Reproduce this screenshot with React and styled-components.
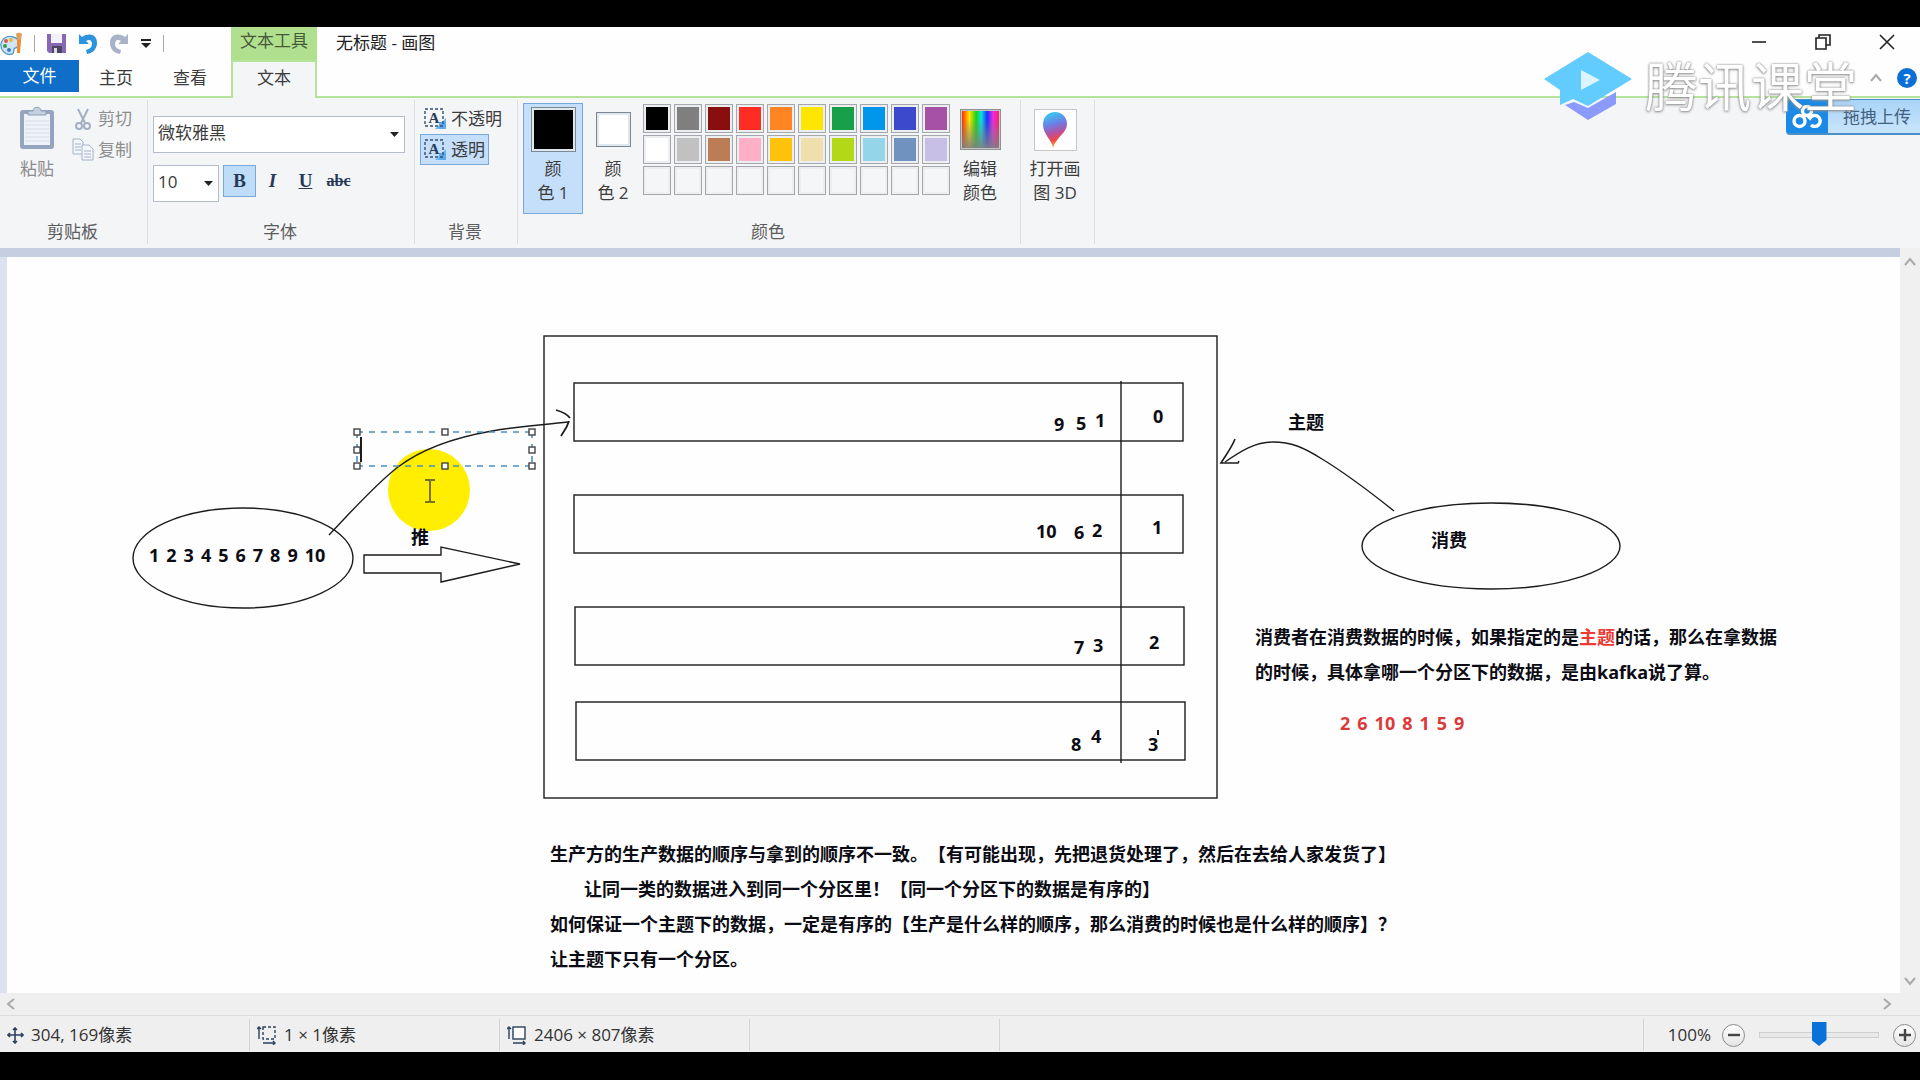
import React, { useState } from "react";
import styled, { createGlobalStyle } from "styled-components";

const COLORS = [
  ["#000000", "#7f7f7f", "#880e10", "#ff2c23", "#ff8423", "#ffe600", "#18a048", "#0096ec", "#3d49cc", "#a651a6"],
  ["#ffffff", "#c1c1c1", "#bb7d55", "#ffb0c8", "#ffc20a", "#eedfac", "#b2d818", "#95d5ea", "#6f92bf", "#c7bfe6"],
  Array(10).fill(null),
];

const PARTITIONS = [
  { x: 567, y: 126, w: 609, h: 58 },
  { x: 567, y: 238, w: 609, h: 58 },
  { x: 568, y: 350, w: 609, h: 58 },
  { x: 569, y: 445, w: 609, h: 58 },
];

const DIGITS = [
  ["9", 1047, 150],
  ["5", 1069, 149],
  ["1", 1088, 146],
  ["0", 1146, 142],
  ["10", 1029, 257],
  ["6", 1067, 258],
  ["2", 1085, 256],
  ["1", 1145, 253],
  ["7", 1067, 373],
  ["3", 1086, 371],
  ["2", 1142, 368],
  ["8", 1064, 470],
  ["4", 1084, 462],
  ["3", 1141, 470],
];

const HANDLES = [
  [350, 175],
  [438, 175],
  [525, 175],
  [350, 193],
  [525, 193],
  [350, 209],
  [438, 209],
  [525, 209],
];

const PaintIcon = () => (
  <svg width="23" height="24" viewBox="0 0 23 24">
    <path d="M1 12C2 6 8 3 13 5c5 1 8 5 6 9-1 2-4 1-5 3s1 4-2 5C6 24 0 18 1 12z" fill="#cfe6f6" stroke="#5c9dcb" strokeWidth="1.4" />
    <circle cx="5" cy="14" r="2" fill="#36a04a" />
    <circle cx="6" cy="9" r="2" fill="#e3574a" />
    <circle cx="11" cy="8" r="2" fill="#f0b52d" />
    <circle cx="9" cy="18" r="2" fill="#3c78c8" />
    <path d="M17 8h4l-1 13h-3z" fill="#ee8b33" />
    <path d="M16 2c2-2 5-1 6 0l-1 6h-4z" fill="#dca15e" />
  </svg>
);

const SaveIcon = () => (
  <svg width="21" height="21" viewBox="0 0 21 21">
    <path d="M1 1h19v19H3l-2-2z" fill="#8668b4" />
    <path d="M5 1h11v9H5z" fill="#f3f1f8" />
    <path d="M6 13h10v7H6z" fill="#4b4560" />
    <path d="M8 15h3v5H8z" fill="#dcd8e6" />
  </svg>
);

const UndoIcon = ({ flip, color }) => (
  <svg width="20" height="21" viewBox="0 0 20 21">
    <g transform={flip ? "translate(20 0) scale(-1 1)" : undefined} fill={color}>
      <path d="M1 1l3 3c8-5 15-2 15 6 0 6-4 10-10 11l-1-4c4-1 6-3 6-6 0-4-3-5-6-3l3 3H1z" />
    </g>
  </svg>
);

const ClipboardIcon = () => (
  <svg width="36" height="44" viewBox="0 0 36 44">
    <rect x="1" y="4" width="34" height="39" rx="3" fill="#94a5bd" />
    <rect x="5" y="8" width="26" height="31" fill="#eef3f9" />
    <path d="M6 15h24M6 19h24M6 23h24M6 27h24M6 31h24M6 35h24" stroke="#d3deea" />
    <path d="M9 9V5h5c0-5 8-5 8 0h5v4z" fill="#c4d0df" stroke="#8d9eb6" />
  </svg>
);

const ScissorsIcon = () => (
  <svg width="16" height="22" viewBox="0 0 16 22" fill="none" stroke="#a3afc3" strokeWidth="2">
    <path d="M3 1l7 14M13 1L6 15" />
    <ellipse cx="4" cy="18" rx="3" ry="3" />
    <ellipse cx="12" cy="18" rx="3" ry="3" />
  </svg>
);

const CopyIcon = () => (
  <svg width="22" height="23" viewBox="0 0 22 23" fill="#f3f6fa" stroke="#a2b2c9">
    <path d="M1 1h7l3 3v12H1z" />
    <path d="M3 6h6M3 9h6M3 12h6" />
    <path d="M10 7h7l4 4v11H10z" />
    <path d="M12 13h7M12 16h7M12 19h7" />
  </svg>
);

const BackgroundIcon = () => (
  <svg width="23" height="22" viewBox="0 0 23 22">
    <path d="M11 21l11-11v11z" fill="#6fb7f3" />
    <path d="M15 14h7v7h-7z" fill="#5cabee" />
    <rect x="1" y="1" width="18" height="17" fill="none" stroke="#34506f" strokeWidth="1.4" strokeDasharray="3 2" />
    <text x="10" y="15" textAnchor="middle" fontFamily="Liberation Serif, serif" fontWeight="700" fontSize="15" fill="#263d5c">
      A
    </text>
  </svg>
);

const Paint3DIcon = () => (
  <svg width="24" height="36" viewBox="0 0 24 36">
    <defs>
      <linearGradient id="drop" x1="0.3" y1="0" x2="0.5" y2="1">
        <stop offset="0" stopColor="#35cdf5" />
        <stop offset="0.35" stopColor="#6b7fe4" />
        <stop offset="0.6" stopColor="#b8509f" />
        <stop offset="0.78" stopColor="#f0474a" />
        <stop offset="1" stopColor="#ffc042" />
      </linearGradient>
    </defs>
    <path d="M12 0c7 0 12 5 12 12 0 9-11 13-14 24C9 28 0 22 0 13 0 5 5 0 12 0z" fill="url(#drop)" />
  </svg>
);

const MoveIcon = () => (
  <svg width="17" height="17" viewBox="0 0 17 17" fill="none" stroke="#2d405f" strokeWidth="1.6">
    <path d="M8 1v15M1 8h15M6 3l2-2 2 2M6 14l2 2 2-2M3 6L1 8l2 2M14 6l2 2-2 2" />
  </svg>
);

const SizeIcon = ({ dashed }) => (
  <svg width="20" height="19" viewBox="0 0 20 19" fill="none" stroke="#2d405f" strokeWidth="1.4">
    <rect x="6" y="1" width="12" height="12" strokeDasharray={dashed ? "3 2" : undefined} fill={dashed ? "none" : "#fff"} />
    <path d="M2 1v12M0 3l2-2 2 2M6 17h12M16 15l2 2-2 2" />
  </svg>
);

const Chevron = ({ turn = 0 }) => (
  <svg width="12" height="12" viewBox="0 0 12 12">
    <path d="M1 9l5-6 5 6" fill="none" stroke="#a9a9a9" strokeWidth="2" transform={`rotate(${turn} 6 6)`} />
  </svg>
);

const Caret = () => (
  <svg width="9" height="5" viewBox="0 0 9 5">
    <path d="M0 0h9L4.5 5z" fill="#222" />
  </svg>
);

const CloudIcon = () => (
  <svg width="30" height="24" viewBox="0 0 30 24" fill="none" stroke="#fff" strokeWidth="3.4">
    <circle cx="15" cy="6" r="4.5" />
    <circle cx="7.5" cy="16" r="5.5" />
    <path d="M16 11l2 2a5.5 5.5 0 1 1 1 7" />
  </svg>
);

const HatLogo = () => (
  <svg width="88" height="70" viewBox="0 0 88 70">
    <path d="M21 53l23 15 28-16V40L44 56l-14-6z" fill="#8a9bfd" />
    <path d="M44 0l44 27-44 27-15-7-13 6V38L0 27z" fill="#62ccff" />
    <path d="M37 18v20l19-10z" fill="#dcf4ff" />
  </svg>
);

const Diagram = () => (
  <Drawing width="1893" height="736" viewBox="0 0 1893 736">
    <circle cx="422" cy="233" r="41" fill="#ffee00" stroke="none" />
    <rect x="537" y="79" width="673" height="462" />
    {PARTITIONS.map((p) => (
      <rect key={p.y} x={p.x} y={p.y} width={p.w} height={p.h} />
    ))}
    <path d="M1114 124v382" />

    <ellipse cx="236" cy="301" rx="110" ry="50" />
    <path d="M322 278L338 261C355 243 374 223 391 210 C420 188 456 179 485 174 S535 168 561 165" />
    <path d="M549 153c7 2 11 4 14 8M562 164c-2 7-5 10-8 15" strokeWidth="1.8" />
    <path d="M357 298h77v-8l79 17-79 18v-9h-77z" />
    <g stroke="#4a90c4" strokeDasharray="6 6" strokeWidth="1.6">
      <path d="M350 175h175M350 209h175M350 175v34M525 175v34" />
    </g>
    {HANDLES.map(([x, y]) => (
      <rect key={`${x}-${y}`} x={x - 3} y={y - 3} width="6" height="6" fill="#fff" stroke="#444" />
    ))}
    <path d="M354 180v25" strokeWidth="2" />
    <path d="M418 223h4l1 1 1-1h4M423 224v20M418 245h4l1-1 1 1h4" stroke="#77721f" strokeWidth="2" />

    <ellipse cx="1484" cy="289" rx="129" ry="43" />
    <path d="M1387 254C1362 234 1338 216 1315 202 C1296 190 1284 185 1266 185 S1234 194 1218 205" />
    <path d="M1228 182c-3 8-9 16-14 24h17l1-2" strokeWidth="1.6" />
    <path d="M1151 473v5" strokeWidth="2" />
  </Drawing>
);

const App = () => {
  const [zoom, setZoom] = useState(50);
  const [color, setColor] = useState("#000000");

  return (
    <>
      <GlobalStyle />
      <Page>
        <Window>
          <TitleBar>
            <QuickAccess>
              <PaintIcon />
              <Divider />
              <IconButton aria-label="保存">
                <SaveIcon />
              </IconButton>
              <IconButton aria-label="撤消">
                <UndoIcon color="#2c93dc" />
              </IconButton>
              <IconButton aria-label="重做">
                <UndoIcon flip color="#a9b3c8" />
              </IconButton>
              <IconButton aria-label="自定义快速访问工具栏">
                <svg width="12" height="10" viewBox="0 0 12 10">
                  <path d="M1 1h10" stroke="#222" strokeWidth="2" />
                  <path d="M1 4h10L6 9z" fill="#222" />
                </svg>
              </IconButton>
              <Divider />
            </QuickAccess>
            <ToolTab>文本工具</ToolTab>
            <Title>无标题 - 画图</Title>
            <WindowButtons>
              <IconButton aria-label="最小化">
                <svg width="16" height="16" viewBox="0 0 16 16" stroke="#222" strokeWidth="1.6">
                  <path d="M1 8h14" />
                </svg>
              </IconButton>
              <IconButton aria-label="还原">
                <svg width="16" height="16" viewBox="0 0 16 16" fill="none" stroke="#222" strokeWidth="1.6">
                  <path d="M1 4h10v11H1zM4 4V1h11v10h-4" />
                </svg>
              </IconButton>
              <IconButton aria-label="关闭">
                <svg width="16" height="16" viewBox="0 0 16 16" stroke="#222" strokeWidth="1.6">
                  <path d="M1 1l14 14M15 1L1 15" />
                </svg>
              </IconButton>
            </WindowButtons>
          </TitleBar>

          <Tabs>
            <FileTab>文件</FileTab>
            <Tab>主页</Tab>
            <Tab>查看</Tab>
            <ActiveTab>文本</ActiveTab>
            <TabsEnd>
              <IconButton aria-label="折叠功能区">
                <Chevron />
              </IconButton>
              <Help aria-label="帮助">?</Help>
            </TabsEnd>
          </Tabs>

          <Ribbon>
            <Group $width={148}>
              <GroupBody $left={19}>
                <PasteButton>
                  <ClipboardIcon />
                  粘贴
                </PasteButton>
                <SmallColumn>
                  <SmallButton $muted>
                    <IconSlot>
                      <ScissorsIcon />
                    </IconSlot>
                    剪切
                  </SmallButton>
                  <SmallButton $muted>
                    <IconSlot>
                      <CopyIcon />
                    </IconSlot>
                    复制
                  </SmallButton>
                </SmallColumn>
              </GroupBody>
              <GroupLabel>剪贴板</GroupLabel>
            </Group>

            <Group $width={267}>
              <FontBody>
                <SelectBox>
                  <select aria-label="字体" defaultValue="微软雅黑">
                    <option>微软雅黑</option>
                  </select>
                  <Caret />
                </SelectBox>
                <FontRow>
                  <SelectBox $width={66}>
                    <select aria-label="字号" defaultValue="10">
                      <option>10</option>
                    </select>
                    <Caret />
                  </SelectBox>
                  <StyleButton $on aria-label="加粗">
                    <b>B</b>
                  </StyleButton>
                  <StyleButton aria-label="倾斜">
                    <i>I</i>
                  </StyleButton>
                  <StyleButton aria-label="下划线">
                    <u>U</u>
                  </StyleButton>
                  <StyleButton $small aria-label="删除线">
                    <s>abc</s>
                  </StyleButton>
                </FontRow>
              </FontBody>
              <GroupLabel>字体</GroupLabel>
            </Group>

            <Group $width={103}>
              <GroupBody $left={5}>
                <SmallColumn>
                  <SmallButton>
                    <BackgroundIcon />
                    不透明
                  </SmallButton>
                  <SmallButton $on>
                    <BackgroundIcon />
                    透明
                  </SmallButton>
                </SmallColumn>
              </GroupBody>
              <GroupLabel>背景</GroupLabel>
            </Group>

            <Group $width={503}>
              <GroupBody $left={5}>
                <ColorButton $on>
                  <ColorSlot>
                    <ColorFrame $size={45} $color={color} />
                  </ColorSlot>
                  <span>
                    颜
                    <br />色 1
                  </span>
                </ColorButton>
                <ColorButton>
                  <ColorSlot>
                    <ColorFrame $size={35} $color="#ffffff" />
                  </ColorSlot>
                  <span>
                    颜
                    <br />色 2
                  </span>
                </ColorButton>
                <Palette>
                  {COLORS.map((row, r) =>
                    row.map((c, i) => (
                      <Swatch
                        key={`${r}-${i}`}
                        $color={c}
                        aria-label={c || "空"}
                        onClick={() => c && setColor(c)}
                      />
                    ))
                  )}
                </Palette>
                <BigButton>
                  <Spectrum />
                  编辑
                  <br />
                  颜色
                </BigButton>
              </GroupBody>
              <GroupLabel>颜色</GroupLabel>
            </Group>

            <Group $width={74}>
              <GroupBody $left={4}>
                <BigButton>
                  <IconFrame>
                    <Paint3DIcon />
                  </IconFrame>
                  打开画
                  <br />图 3D
                </BigButton>
              </GroupBody>
            </Group>
          </Ribbon>

          <Workspace>
            <CanvasArea>
              <Canvas>
                <Diagram />
                <Numbers $x={142} $y={281} $gap={7}>
                  {[1, 2, 3, 4, 5, 6, 7, 8, 9, 10].map((n) => (
                    <span key={n}>{n}</span>
                  ))}
                </Numbers>
                <Note $x={404} $y={263}>推</Note>
                {DIGITS.map(([d, x, y]) => (
                  <Note key={`${x}-${y}`} $x={x} $y={y}>
                    {d}
                  </Note>
                ))}
                <Note $x={1281} $y={148}>主题</Note>
                <Note $x={1424} $y={266}>消费</Note>
                <Note $x={1248} $y={363}>
                  消费者在消费数据的时候，如果指定的是<em>主题</em>的话，那么在拿数据
                  <br />
                  的时候，具体拿哪一个分区下的数据，是由kafka说了算。
                </Note>
                <Numbers $red $x={1333} $y={449} $gap={7}>
                  {[2, 6, 10, 8, 1, 5, 9].map((n) => (
                    <span key={n}>{n}</span>
                  ))}
                </Numbers>
                <Note $x={543} $y={580}>
                  生产方的生产数据的顺序与拿到的顺序不一致。【有可能出现，先把退货处理了，然后在去给人家发货了】
                  <Indent>让同一类的数据进入到同一个分区里！【同一个分区下的数据是有序的】</Indent>
                  如何保证一个主题下的数据，一定是有序的【生产是什么样的顺序，那么消费的时候也是什么样的顺序】？
                  <br />
                  让主题下只有一个分区。
                </Note>
              </Canvas>
            </CanvasArea>
            <VerticalBar>
              <Chevron />
              <Chevron turn={180} />
            </VerticalBar>
          </Workspace>

          <HorizontalBar>
            <Chevron turn={-90} />
            <Chevron turn={90} />
          </HorizontalBar>

          <StatusBar>
            <StatusCell>
              <MoveIcon />
              304, 169像素
            </StatusCell>
            <StatusCell>
              <SizeIcon dashed />1 × 1像素
            </StatusCell>
            <StatusCell>
              <SizeIcon />
              2406 × 807像素
            </StatusCell>
            <StatusCell />
            <ZoomCell>
              <label htmlFor="zoom">100%</label>
              <RoundButton aria-label="缩小">
                <svg width="12" height="12" viewBox="0 0 12 12" stroke="#444" strokeWidth="2.4">
                  <path d="M0 6h12" />
                </svg>
              </RoundButton>
              <Slider id="zoom" type="range" value={zoom} onChange={(e) => setZoom(Number(e.target.value))} />
              <RoundButton aria-label="放大">
                <svg width="12" height="12" viewBox="0 0 12 12" stroke="#444" strokeWidth="2.4">
                  <path d="M0 6h12M6 0v12" />
                </svg>
              </RoundButton>
            </ZoomCell>
          </StatusBar>

          <Upload href="#upload">
            <UploadIcon>
              <CloudIcon />
            </UploadIcon>
            拖拽上传
          </Upload>
          <Watermark>
            <HatLogo />
            腾讯课堂
          </Watermark>
        </Window>
      </Page>
    </>
  );
};

export default App;

const GlobalStyle = createGlobalStyle`
  * {
    box-sizing: border-box;
  }

  body {
    margin: 0;
    background: #000;
    color: #3c3c3c;
    font-family: "Open Sans", "Noto Sans CJK SC", sans-serif;
    font-size: 17px;
    line-height: 24px;
    text-spacing-trim: space-all;
  }

  button, select {
    font: inherit;
    color: inherit;
    background: none;
    border: 0;
    padding: 0;
    margin: 0;
  }

  svg {
    display: block;
    flex-shrink: 0;
  }
`;

const Page = styled.div`
  min-height: 100vh;
  display: flex;
  flex-direction: column;
  padding: 27px 0 28px;
  background: #000;
`;

const Window = styled.div`
  flex: 1;
  display: flex;
  flex-direction: column;
  position: relative;
  overflow: hidden;
  background: #fefefe;
`;

const TitleBar = styled.header`
  display: flex;
  height: 33px;
`;

const QuickAccess = styled.div`
  display: flex;
  align-items: center;
  gap: 11px;
  width: 231px;
`;

const Divider = styled.span`
  width: 1px;
  height: 17px;
  background: #a8a8a8;
`;

const IconButton = styled.button`
  display: flex;
  align-items: center;
  justify-content: center;
`;

const ToolTab = styled.div`
  width: 86px;
  padding-top: 2px;
  text-align: center;
  background: #b0e08e;
  color: #45583a;
`;

const Title = styled.div`
  padding: 4px 0 0 19px;
  color: #222;
`;

const WindowButtons = styled.div`
  display: flex;
  gap: 48px;
  align-items: center;
  margin-left: auto;
  padding: 0 25px 4px 0;
`;

const Tabs = styled.nav`
  display: flex;
  height: 38px;
  border-bottom: 2px solid #b5e39a;
`;

const Tab = styled.button`
  width: 74px;
  height: 36px;
`;

const FileTab = styled(Tab)`
  width: 79px;
  height: 32px;
  background: #0f6fc8;
  color: #fff;
`;

const ActiveTab = styled(Tab)`
  width: 86px;
  height: 38px;
  margin-left: 4px;
  padding-bottom: 4px;
  background: #f4f5f7;
  border: 2px solid #b5e39a;
  border-bottom: 0;
`;

const TabsEnd = styled.div`
  display: flex;
  align-items: center;
  gap: 15px;
  margin-left: auto;
  padding-right: 3px;
`;

const Help = styled.button`
  width: 20px;
  height: 20px;
  border-radius: 50%;
  background: #0b6fd6;
  color: #fff;
  font-size: 15px;
  font-weight: 700;
  line-height: 20px;
`;

const Ribbon = styled.div`
  display: flex;
  height: 150px;
  padding: 2px 0 4px;
  background: #f4f5f7;
`;

const Group = styled.section`
  display: flex;
  flex-direction: column;
  justify-content: space-between;
  width: ${(props) => props.$width}px;
  border-right: 1px solid #dcdfe4;
`;

const GroupBody = styled.div`
  display: flex;
  align-items: flex-start;
  padding: 3px 0 0 ${(props) => props.$left}px;
`;

const GroupLabel = styled.div`
  padding-right: 2px;
  text-align: center;
  color: #5c5c5c;
`;

const PasteButton = styled.button`
  display: flex;
  flex-direction: column;
  align-items: center;
  gap: 7px;
  margin-right: 17px;
  padding-top: 3px;
  color: #8c8c8c;
`;

const SmallColumn = styled.div`
  display: flex;
  flex-direction: column;
  align-items: flex-start;
`;

const SmallButton = styled.button`
  display: flex;
  align-items: center;
  gap: 4px;
  height: 31px;
  padding: 0 ${(props) => (props.$muted ? 0 : 3)}px;
  color: ${(props) => (props.$muted ? "#8f8f8f" : "inherit")};
  background: ${(props) => (props.$on ? "#c5dffa" : "none")};
  border: ${(props) => (props.$muted ? 0 : 1)}px solid ${(props) => (props.$on ? "#77a9dc" : "transparent")};
`;

const IconSlot = styled.span`
  display: flex;
  justify-content: center;
  width: 22px;
`;

const FontBody = styled.div`
  display: flex;
  flex-direction: column;
  gap: 12px;
  padding: 16px 9px 0 5px;
`;

const FontRow = styled.div`
  display: flex;
  align-items: flex-start;
`;

const SelectBox = styled.div`
  position: relative;
  width: ${(props) => (props.$width ? `${props.$width}px` : "100%")};
  margin-right: ${(props) => (props.$width ? 4 : 0)}px;

  select {
    display: block;
    width: 100%;
    height: 37px;
    padding: 0 4px 4px;
    appearance: none;
    background: #fff;
    border: 1px solid #b2bccb;
  }

  svg {
    position: absolute;
    top: 16px;
    right: 6px;
    pointer-events: none;
  }
`;

const StyleButton = styled.button`
  width: 33px;
  height: 32px;
  font-family: "Liberation Serif", serif;
  font-size: ${(props) => (props.$small ? 16 : 19)}px;
  font-weight: 700;
  color: #263a58;
  background: ${(props) => (props.$on ? "#bfdcf8" : "none")};
  border: 1px solid ${(props) => (props.$on ? "#77a9dc" : "transparent")};
`;

const ColorButton = styled.button`
  display: flex;
  flex-direction: column;
  align-items: center;
  width: 60px;
  height: 111px;
  background: ${(props) => (props.$on ? "#c5dffa" : "none")};
  border: 1px solid ${(props) => (props.$on ? "#77a9dc" : "transparent")};
`;

const ColorSlot = styled.span`
  display: flex;
  align-items: center;
  height: 51px;
  margin-bottom: 2px;
`;

const ColorFrame = styled.span`
  width: ${(props) => props.$size}px;
  height: ${(props) => props.$size}px;
  background: ${(props) => props.$color};
  border: 1px solid #7d8792;
  box-shadow: inset 0 0 0 2px #dfe7ef;
`;

const Palette = styled.div`
  display: grid;
  grid-template-columns: repeat(10, 28px);
  grid-auto-rows: 29px;
  gap: 2px 3px;
  padding-top: 1px;
`;

const Swatch = styled.button`
  background: ${(props) => props.$color || "#f5f6f7"};
  border: 1px solid #a4a7ab;
  box-shadow: inset 0 0 0 2px #eceef0;
`;

const BigButton = styled.button`
  width: 60px;
  padding-top: 6px;
`;

const Spectrum = styled.span`
  display: block;
  width: 41px;
  height: 41px;
  margin: 0 auto 7px;
  border: 2px solid #c4c4c4;
  outline: 1px solid #909090;
  outline-offset: -1px;
  background:
    linear-gradient(transparent 20%, rgba(128, 128, 128, 0.9)),
    linear-gradient(90deg, #ff2a00, #ffe600 20%, #19d319 38%, #0be0e0 52%, #1630ff 68%, #f02ae6 84%, #ff2060);
`;

const IconFrame = styled.span`
  display: flex;
  align-items: center;
  justify-content: center;
  width: 43px;
  height: 42px;
  margin: 0 auto 6px;
  background: #fff;
  border: 1px solid #c6c6c6;
`;

const Workspace = styled.main`
  flex: 1;
  display: flex;
  min-height: 0;
  background: #dbe3f0;
`;

const CanvasArea = styled.div`
  flex: 1;
  min-width: 0;
  padding-left: 7px;
  border-top: 9px solid #c5cfe1;
`;

const Canvas = styled.div`
  position: relative;
  height: 100%;
  min-height: 736px;
  overflow: hidden;
  background: #fefefe;
`;

const Drawing = styled.svg`
  fill: none;
  stroke: #1c1c1c;
  stroke-width: 1.4;
`;

const Note = styled.div`
  position: absolute;
  left: ${(props) => props.$x}px;
  top: ${(props) => props.$y}px;
  color: #0c0c14;
  font-size: 18px;
  font-weight: 700;
  line-height: 35px;
  white-space: nowrap;

  em {
    color: #ec3a34;
    font-style: normal;
  }
`;

const Indent = styled.div`
  padding-left: 34px;
`;

const Numbers = styled(Note)`
  display: flex;
  gap: ${(props) => props.$gap}px;
  color: ${(props) => (props.$red ? "#dc3a3a" : "#0c0c14")};
`;

const VerticalBar = styled.div`
  display: flex;
  flex-direction: column;
  align-items: center;
  justify-content: space-between;
  width: 20px;
  padding: 8px 0 6px;
  background: #f0f0f0;
`;

const HorizontalBar = styled.div`
  display: flex;
  align-items: center;
  justify-content: space-between;
  height: 23px;
  padding: 0 27px 0 5px;
  background: #efefef;
  border-bottom: 1px solid #dcdcdc;
`;

const StatusBar = styled.footer`
  display: flex;
  height: 36px;
  padding: 3px 0 1px;
  background: #efefef;
  color: #333;
`;

const StatusCell = styled.div`
  display: flex;
  align-items: center;
  gap: 7px;
  width: 250px;
  padding-left: 7px;
  border-right: 1px solid #d4d4d4;
`;

const ZoomCell = styled.div`
  display: flex;
  align-items: center;
  margin-left: auto;
  padding: 0 4px 0 24px;
  border-left: 1px solid #d4d4d4;

  label {
    margin-right: 11px;
  }
`;

const RoundButton = styled.button`
  display: flex;
  align-items: center;
  justify-content: center;
  width: 23px;
  height: 23px;
  border: 1px solid #8a8a8a;
  border-radius: 50%;
  background: linear-gradient(#fff, #e4e4e4);
`;

const Slider = styled.input`
  appearance: none;
  width: 120px;
  height: 24px;
  margin: 0 14px;
  background: none;

  &::-webkit-slider-runnable-track {
    height: 6px;
    background: #e9e9e9;
    border: 1px solid #cfcfcf;
  }

  &::-webkit-slider-thumb {
    appearance: none;
    width: 15px;
    height: 24px;
    margin-top: -11px;
    background: #0b70d8;
    clip-path: polygon(0 0, 100% 0, 100% 75%, 50% 100%, 0 75%);
  }
`;

const Upload = styled.a`
  position: absolute;
  top: 72px;
  right: 0;
  display: flex;
  align-items: center;
  gap: 15px;
  width: 134px;
  height: 36px;
  border-radius: 4px 0 0 4px;
  overflow: hidden;
  white-space: nowrap;
  text-decoration: none;
  color: #41617f;
  background: linear-gradient(#a9d3f7, #c9e5fc);
  border: solid #4a8fc8;
  border-width: 1px 0 2px;
`;

const UploadIcon = styled.span`
  display: flex;
  align-items: center;
  justify-content: center;
  width: 42px;
  height: 100%;
  background: #1a8ae6;
`;

const Watermark = styled.div`
  position: absolute;
  top: 25px;
  right: 63px;
  display: flex;
  align-items: center;
  gap: 13px;
  color: #fff;
  font-size: 53px;
  line-height: 70px;
  text-shadow: 0 0 2px #777, 0 1px 3px #999;
  pointer-events: none;
`;
